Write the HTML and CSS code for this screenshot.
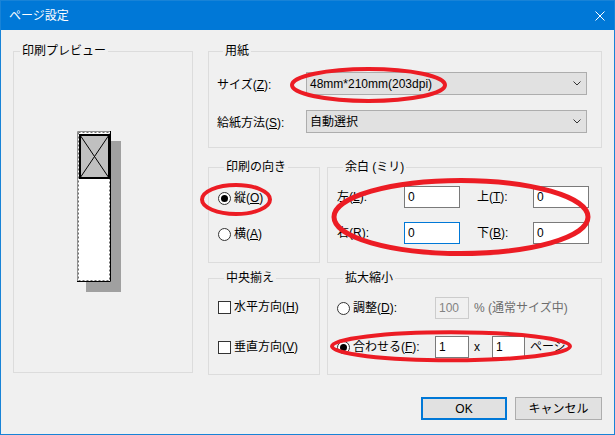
FILE: index.html
```html
<!DOCTYPE html>
<html lang="ja">
<head>
<meta charset="utf-8">
<title>ページ設定</title>
<link rel="stylesheet" href="styles.css">
</head>
<body>
<div class="window">
  <div class="titlebar">
    <span class="title">ページ設定</span>
    <svg class="close" width="10" height="10" viewBox="0 0 10 10"><path d="M0.5 0.5 L9.5 9.5 M9.5 0.5 L0.5 9.5" stroke="#fff" stroke-width="1" fill="none"/></svg>
  </div>
  <div class="content">
    <div class="main">
      <div class="group preview">
        <div class="legend">印刷プレビュー</div>
        <svg class="page" width="44" height="161" viewBox="0 0 44 161">
          <rect x="9" y="10" width="35" height="151" fill="#a0a0a0"/>
          <rect x="0" y="0" width="34" height="151" fill="#fff"/>
          <path d="M0.5 151 V0.5 H33" stroke="#909090" stroke-width="1" fill="none"/>
          <path d="M33.5 0 V150.5 H0" stroke="#000" stroke-width="1" fill="none"/>
          <rect x="1.5" y="1.5" width="31" height="148" stroke="#707070" stroke-width="1" stroke-dasharray="2 2" fill="none"/>
          <rect x="3" y="4" width="29" height="43" fill="#c0c0c0" stroke="#000" stroke-width="2"/>
          <path d="M3 4 L32 47 M32 4 L3 47" stroke="#000" stroke-width="1" fill="none"/>
        </svg>
      </div>
      <div class="right">
        <div class="group paper">
          <div class="legend">用紙</div>
          <div class="frow first">
            <span class="flabel">サイズ(<u>Z</u>):</span>
            <div class="select"><span>48mm*210mm(203dpi)</span><svg width="8" height="5" viewBox="0 0 8 5"><path d="M0.5 0.5 L4 4 L7.5 0.5" stroke="#333" fill="none"/></svg></div>
          </div>
          <div class="frow">
            <span class="flabel">給紙方法(<u>S</u>):</span>
            <div class="select"><span>自動選択</span><svg width="8" height="5" viewBox="0 0 8 5"><path d="M0.5 0.5 L4 4 L7.5 0.5" stroke="#333" fill="none"/></svg></div>
          </div>
        </div>
        <div class="row row1">
          <div class="group orient">
            <div class="legend">印刷の向き</div>
            <div class="opt o1"><span class="radio on"></span><span>縦(<u>O</u>)</span></div>
            <div class="opt o2"><span class="radio"></span><span>横(<u>A</u>)</span></div>
          </div>
          <div class="group margins">
            <div class="legend">余白 (ミリ)</div>
            <div class="mrow m1">
              <span class="ml">左(<u>L</u>):</span><input class="tb" type="text" value="0">
              <span class="ml2">上(<u>T</u>):</span><input class="tb" type="text" value="0">
            </div>
            <div class="mrow m2">
              <span class="ml">右(<u>R</u>):</span><input class="tb focus" type="text" value="0">
              <span class="ml2">下(<u>B</u>):</span><input class="tb" type="text" value="0">
            </div>
          </div>
        </div>
        <div class="row row2">
          <div class="group center">
            <div class="legend">中央揃え</div>
            <div class="opt c1"><span class="check"></span><span>水平方向(<u>H</u>)</span></div>
            <div class="opt c2"><span class="check"></span><span>垂直方向(<u>V</u>)</span></div>
          </div>
          <div class="group scale">
            <div class="legend">拡大縮小</div>
            <div class="srow s1">
              <div class="opt slabel"><span class="radio"></span><span>調整(<u>D</u>):</span></div>
              <input class="tb small disabled" type="text" value="100" disabled>
              <span class="gray">% (通常サイズ中)</span>
            </div>
            <div class="srow s2">
              <div class="opt slabel"><span class="radio on"></span><span>合わせる(<u>F</u>):</span></div>
              <input class="tb small" type="text" value="1">
              <span class="times">x</span>
              <input class="tb small2" type="text" value="1">
              <span class="pages">ページ</span>
            </div>
          </div>
        </div>
      </div>
    </div>
    <div class="buttons">
      <button class="btn ok">OK</button>
      <button class="btn cancel">キャンセル</button>
    </div>
  </div>
  <svg class="annot" width="615" height="435" viewBox="0 0 615 435">
    <g fill="none" stroke="#ec1c24">
      <ellipse cx="368.5" cy="85" rx="76.5" ry="16" stroke-width="4"/>
      <ellipse cx="236" cy="199.5" rx="34" ry="14.5" stroke-width="4"/>
      <ellipse cx="461" cy="217" rx="127" ry="36.5" stroke-width="5"/>
      <ellipse cx="451" cy="346.3" rx="119" ry="14" stroke-width="4"/>
    </g>
  </svg>
</div>
</body>
</html>
```

FILE: styles.css
```css
* { box-sizing: border-box; }
html, body { margin: 0; padding: 0; }
body {
  width: 615px;
  height: 435px;
  overflow: hidden;
  font-family: "Liberation Sans", "Noto Sans CJK JP", sans-serif;
  font-size: 12px;
  color: #000;
  background: #f0f0f0;
}
u { text-decoration: underline; text-underline-offset: 1px; }

.window {
  position: relative;
  width: 615px;
  height: 435px;
  border: 1px solid #1883d7;
  background: #f0f0f0;
  display: flex;
  flex-direction: column;
}
.titlebar {
  flex: none;
  height: 29px;
  background: #0078d7;
  color: #fff;
  display: flex;
  align-items: center;
  justify-content: space-between;
  padding: 0 9px 0 8px;
  line-height: 16px;
}
.title { font-size: 12px; }

.content { padding: 21px 12px 0 12px; }
.main { display: flex; gap: 15px; align-items: flex-start; }

.group { border: 1px solid #dcdcdc; }
.legend {
  width: fit-content;
  height: 16px;
  line-height: 16px;
  margin: -9px 0 0 6px;
  padding: 0 2px;
  background: #f0f0f0;
  white-space: nowrap;
}

.preview { width: 180px; height: 322px; }
.page { display: block; margin: 72px 0 0 63px; }

.right { width: 394px; display: flex; flex-direction: column; }
.paper { height: 97px; padding: 0 14px 0 8px; }
.frow { display: flex; align-items: center; height: 23px; margin-top: 15px; }
.frow.first { margin-top: 13px; }
.flabel { width: 89px; white-space: nowrap; }
.select {
  width: 281px;
  height: 23px;
  background: #e1e1e1;
  border: 1px solid #adadad;
  display: flex;
  align-items: center;
  justify-content: space-between;
  padding: 0 5px 0 3px;
  line-height: 16px;
}
.select svg { display: block; }

.row { display: flex; gap: 7px; }
.row1 { margin-top: 19px; }
.row2 { margin-top: 15px; }
.orient, .center { width: 112px; padding-left: 9px; }
.margins, .scale { width: 275px; padding-left: 9px; }
.row1 .group { height: 96px; }
.row2 .group { height: 97px; }

.opt { display: flex; align-items: center; gap: 3px; height: 20px; white-space: nowrap; line-height: 16px; }
.o1 { margin-top: 13px; }
.o2 { margin-top: 16px; }
.c1 { margin-top: 11px; }
.c2 { margin-top: 20px; }

.radio {
  flex: none;
  position: relative;
  width: 13px;
  height: 13px;
  border: 1px solid #333;
  border-radius: 50%;
  background: #fff;
}
.radio.on::after {
  content: "";
  position: absolute;
  left: 2px;
  top: 2px;
  width: 7px;
  height: 7px;
  border-radius: 50%;
  background: #000;
}
.check {
  flex: none;
  width: 13px;
  height: 13px;
  border: 1px solid #333;
  background: #fff;
}

.mrow { display: flex; align-items: center; height: 22px; line-height: 16px; }
.m1 { margin-top: 11px; }
.m2 { margin-top: 14px; }
.ml { width: 67px; white-space: nowrap; }
.ml2 { width: 56px; margin-left: 17px; white-space: nowrap; }

.tb {
  width: 56px;
  height: 22px;
  border: 1px solid #7a7a7a;
  background: #fff;
  padding: 0 0 0 3px;
  margin: 0;
  font: inherit;
  line-height: 16px;
  color: #000;
  outline: none;
}
.tb.focus { border-color: #0078d7; }
.tb.small { width: 34px; }
.tb.small2 { width: 33px; }
.tb.disabled { background: #f0f0f0; border-color: #cccccc; color: #838383; }

.srow { display: flex; align-items: center; height: 22px; line-height: 16px; }
.s1 { margin-top: 11px; }
.s2 { margin-top: 17px; }
.slabel { width: 98px; height: 22px; }
.gray { color: #6d6d6d; margin-left: 5px; white-space: nowrap; }
.times { width: 23px; padding-left: 5px; }
.pages { margin-left: 5px; }

.buttons { display: flex; justify-content: flex-end; gap: 8px; margin-top: 22px; }
.btn {
  height: 23px;
  margin: 0;
  padding: 0;
  border: 1px solid #adadad;
  background: #e1e1e1;
  font: inherit;
  line-height: 16px;
  color: #000;
}
.ok { width: 86px; border: 2px solid #0078d7; }
.cancel { width: 87px; }

.annot { position: absolute; left: -1px; top: -1px; pointer-events: none; }
```
